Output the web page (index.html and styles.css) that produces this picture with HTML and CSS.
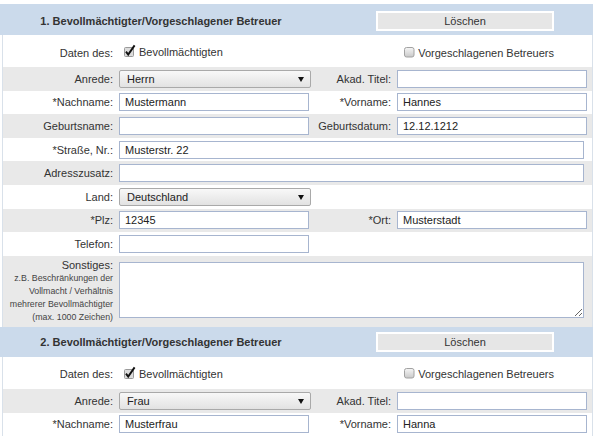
FILE: index.html
```html
<!DOCTYPE html>
<html lang="de">
<head>
    <meta charset="UTF-8">
    <meta name="viewport" content="width=device-width, initial-scale=1.0">
    <title>Bevollmächtigte</title>
    <link rel="stylesheet" href="styles.css">
</head>
<body>
    <div class="form">
        <section class="person">
            <div class="head first">
                <h2 class="head-title">1. Bevollmächtigter/Vorgeschlagener Betreuer</h2>
                <button class="btn-delete" type="button">Löschen</button>
            </div>
            <div class="fields">
                <div class="row row-type">
                    <label class="label">Daten des:</label>
                    <div class="field">
                        <span class="check">
                            <svg width="12" height="13" viewBox="0 0 12 13"><rect x="0.5" y="3.5" width="9" height="9" rx="1" fill="#dcdcdc" stroke="#9a9a9a"/><path d="M2 7.6 L4.2 10.6 L10.6 1.4" fill="none" stroke="#111" stroke-width="1.9"/></svg>
                            Bevollmächtigten
                        </span>
                    </div>
                    <div class="field-right">
                        <span class="check">
                            <svg width="11" height="11" viewBox="0 0 11 11"><defs><linearGradient id="cb1" x1="0" y1="0" x2="0" y2="1"><stop offset="0" stop-color="#f6f6f6"/><stop offset="1" stop-color="#c9c9c9"/></linearGradient></defs><rect x="0.5" y="0.5" width="9.5" height="9.5" rx="2" fill="url(#cb1)" stroke="#a2a2a2"/></svg>
                            Vorgeschlagenen Betreuers
                        </span>
                    </div>
                </div>
                <div class="row alt">
                    <label class="label">Anrede:</label>
                    <div class="field"><div class="select"><select><option>Herrn</option></select></div></div>
                    <label class="label">Akad. Titel:</label>
                    <div class="field"><input class="text" type="text" value=""></div>
                </div>
                <div class="row">
                    <label class="label">*Nachname:</label>
                    <div class="field"><input class="text" type="text" value="Mustermann"></div>
                    <label class="label">*Vorname:</label>
                    <div class="field"><input class="text" type="text" value="Hannes"></div>
                </div>
                <div class="row alt">
                    <label class="label">Geburtsname:</label>
                    <div class="field"><input class="text" type="text" value=""></div>
                    <label class="label">Geburtsdatum:</label>
                    <div class="field"><input class="text" type="text" value="12.12.1212"></div>
                </div>
                <div class="row">
                    <label class="label">*Straße, Nr.:</label>
                    <div class="field wide"><input class="text" type="text" value="Musterstr. 22"></div>
                </div>
                <div class="row alt">
                    <label class="label">Adresszusatz:</label>
                    <div class="field wide"><input class="text" type="text" value=""></div>
                </div>
                <div class="row">
                    <label class="label">Land:</label>
                    <div class="field"><div class="select"><select><option>Deutschland</option></select></div></div>
                </div>
                <div class="row alt">
                    <label class="label">*Plz:</label>
                    <div class="field"><input class="text" type="text" value="12345"></div>
                    <label class="label">*Ort:</label>
                    <div class="field"><input class="text" type="text" value="Musterstadt"></div>
                </div>
                <div class="row">
                    <label class="label">Telefon:</label>
                    <div class="field"><input class="text" type="text" value=""></div>
                </div>
                <div class="row alt row-notes">
                    <label class="label">
                        Sonstiges:
                        <small>z.B. Beschränkungen der<br>Vollmacht / Verhältnis<br>mehrerer Bevollmächtigter<br>(max. 1000 Zeichen)</small>
                    </label>
                    <div class="field wide"><textarea></textarea></div>
                </div>
            </div>
        </section>

        <section class="person">
            <div class="head">
                <h2 class="head-title">2. Bevollmächtigter/Vorgeschlagener Betreuer</h2>
                <button class="btn-delete" type="button">Löschen</button>
            </div>
            <div class="fields">
                <div class="row row-type">
                    <label class="label">Daten des:</label>
                    <div class="field">
                        <span class="check">
                            <svg width="12" height="13" viewBox="0 0 12 13"><rect x="0.5" y="3.5" width="9" height="9" rx="1" fill="#dcdcdc" stroke="#9a9a9a"/><path d="M2 7.6 L4.2 10.6 L10.6 1.4" fill="none" stroke="#111" stroke-width="1.9"/></svg>
                            Bevollmächtigten
                        </span>
                    </div>
                    <div class="field-right">
                        <span class="check">
                            <svg width="11" height="11" viewBox="0 0 11 11"><defs><linearGradient id="cb2" x1="0" y1="0" x2="0" y2="1"><stop offset="0" stop-color="#f6f6f6"/><stop offset="1" stop-color="#c9c9c9"/></linearGradient></defs><rect x="0.5" y="0.5" width="9.5" height="9.5" rx="2" fill="url(#cb2)" stroke="#a2a2a2"/></svg>
                            Vorgeschlagenen Betreuers
                        </span>
                    </div>
                </div>
                <div class="row alt">
                    <label class="label">Anrede:</label>
                    <div class="field"><div class="select"><select><option>Frau</option></select></div></div>
                    <label class="label">Akad. Titel:</label>
                    <div class="field"><input class="text" type="text" value=""></div>
                </div>
                <div class="row">
                    <label class="label">*Nachname:</label>
                    <div class="field"><input class="text" type="text" value="Musterfrau"></div>
                    <label class="label">*Vorname:</label>
                    <div class="field"><input class="text" type="text" value="Hanna"></div>
                </div>
            </div>
        </section>
    </div>
</body>
</html>
```

FILE: styles.css
```css
body {
    margin: 0;
    padding-top: 4px;
    font-family: "Liberation Sans", Arial, sans-serif;
    font-size: 11px;
    color: #333;
    background: #fff;
}
.form {
    width: 593px;
}
.head {
    display: flex;
    align-items: center;
    height: 30px;
    padding-top: 1px;
    box-sizing: border-box;
    background: #cbdaeb;
}
.head.first {
    height: 31px;
    padding-top: 3px;
}
.head-title {
    width: 322px;
    margin: 0;
    text-align: center;
    font-size: 11px;
    font-weight: bold;
    color: #333;
}
.btn-delete {
    margin-left: 54px;
    width: 178px;
    height: 20px;
    border: 2px solid #fff;
    background: #e6e6e6;
    font-family: inherit;
    font-size: 11px;
    color: #333;
    padding: 0;
}
.fields {
    margin-left: 2px;
    border-left: 1px solid #d9e1ea;
    border-right: 1px solid #d9e1ea;
}
.row {
    display: grid;
    grid-template-columns: 113px 200px 78px 198px;
    align-items: center;
    height: 23.6px;
}
.row.alt {
    background: #e9e9e9;
}
.row-type {
    height: 32px;
    padding-top: 3px;
    box-sizing: border-box;
}
.label {
    text-align: right;
    padding-right: 3px;
    white-space: nowrap;
}
.field {
    padding-left: 3px;
}
.field.wide {
    grid-column: 2 / 5;
}
.field-right {
    grid-column: 3 / 5;
    display: flex;
    justify-content: flex-end;
    padding-right: 38px;
}
.check {
    display: inline-flex;
    align-items: center;
    gap: 3px;
}
.check svg {
    display: block;
}
.row-type .field .check {
    margin-left: 5px;
}
.row-type .field .check svg {
    margin-top: -3px;
}
.row-type .field-right .check svg {
    margin-top: -1px;
}
input.text {
    display: block;
    width: 190px;
    height: 18px;
    box-sizing: border-box;
    border: 1px solid #a7b5cf;
    padding: 0 5px;
    font-family: inherit;
    font-size: 11px;
    color: #222;
    background: #fff;
}
.wide input.text {
    width: 465px;
}
.select {
    position: relative;
    width: 192px;
    height: 18px;
}
.select select {
    appearance: none;
    -webkit-appearance: none;
    display: block;
    width: 100%;
    height: 18px;
    border: 1px solid #a9a9a9;
    border-radius: 2px;
    background: linear-gradient(#f8f8f8, #e2e2e2);
    padding: 0 0 0 7px;
    font-family: inherit;
    font-size: 11px;
    color: #222;
}
.select::after {
    content: "";
    position: absolute;
    right: 7px;
    top: 7px;
    border-left: 3.5px solid transparent;
    border-right: 3.5px solid transparent;
    border-top: 5px solid #111;
    pointer-events: none;
}
.row-notes {
    height: 71.2px;
    align-items: start;
}
.row-notes .label {
    padding-top: 3px;
    line-height: 13px;
}
.row-notes small {
    display: block;
    font-size: 8.8px;
    line-height: 13px;
    color: #444;
}
textarea {
    display: block;
    width: 465px;
    height: 56px;
    margin-top: 6px;
    box-sizing: border-box;
    border: 1px solid #a7b5cf;
    font-family: inherit;
    font-size: 11px;
}
```
